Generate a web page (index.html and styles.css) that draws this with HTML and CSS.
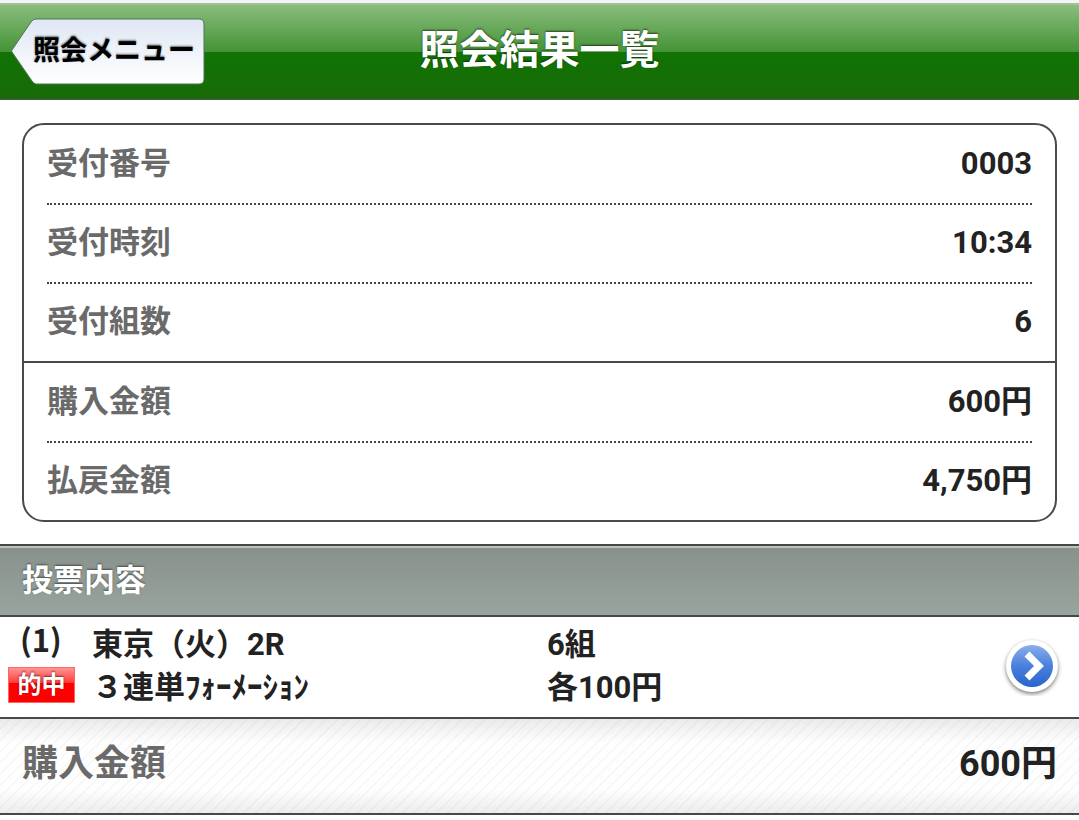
FILE: index.html
```html
<!DOCTYPE html>
<html lang="ja">
<head>
    <meta charset="UTF-8">
    <meta name="viewport" content="width=device-width, initial-scale=1.0">
    <title>照会結果一覧</title>
    <link rel="stylesheet" href="styles.css">
</head>
<body>
    <!-- Title bar with the back button -->
    <header class="header">
        <button type="button" class="back-button">
            <svg class="back-shape" viewBox="0 0 194 67" preserveAspectRatio="none" aria-hidden="true">
                <defs>
                    <linearGradient id="backFill" x1="0" y1="0" x2="0" y2="1">
                        <stop offset="0" stop-color="#dfe7f4"/>
                        <stop offset="1" stop-color="#ffffff"/>
                    </linearGradient>
                </defs>
                <path d="M25 1 H188 Q193 1 193 6 V61 Q193 66 188 66 H25 Q23 66 21 63 L1 34 Q0 33 1 32 L20 4 Q22 1 25 1 Z" fill="url(#backFill)" stroke="#55705a" stroke-width="1"/>
            </svg>
            <span class="back-label">照会メニュー</span>
        </button>
        <h1>照会結果一覧</h1>
    </header>

    <main>
        <!-- Receipt summary -->
        <div class="summary">
            <dl class="summary-group">
                <div class="summary-row"><dt>受付番号</dt><dd>0003</dd></div>
                <div class="summary-row"><dt>受付時刻</dt><dd>10:34</dd></div>
                <div class="summary-row"><dt>受付組数</dt><dd>6</dd></div>
            </dl>
            <dl class="summary-group">
                <div class="summary-row"><dt>購入金額</dt><dd>600円</dd></div>
                <div class="summary-row"><dt>払戻金額</dt><dd>4,750円</dd></div>
            </dl>
        </div>

        <!-- List of bets -->
        <h2>投票内容</h2>
        <a href="#detail" class="bet">
            <span class="bet-status">
                <span class="bet-number">(1)</span>
                <span class="hit">的中</span>
            </span>
            <span class="bet-text">
                <span>東京（火）2R</span>
                <span>３連単ﾌｫｰﾒｰｼｮﾝ</span>
            </span>
            <span class="bet-text">
                <span>6組</span>
                <span>各100円</span>
            </span>
            <svg class="bet-arrow" viewBox="0 0 60 60" aria-hidden="true">
                <defs>
                    <linearGradient id="arrowFill" x1="0" y1="0" x2="0" y2="1">
                        <stop offset="0" stop-color="#8aaeea"/>
                        <stop offset="0.5" stop-color="#4a80dc"/>
                        <stop offset="1" stop-color="#2864cf"/>
                    </linearGradient>
                </defs>
                <circle class="arrow-rim" cx="30" cy="30" r="26"/>
                <circle cx="30" cy="30" r="21" fill="url(#arrowFill)"/>
                <path d="M25 18 L37 30 L25 42" fill="none" stroke="#fff" stroke-width="7"/>
            </svg>
        </a>

        <!-- Total amount -->
        <dl class="total">
            <dt>購入金額</dt>
            <dd>600円</dd>
        </dl>
    </main>
</body>
</html>
```
FILE: styles.css
```css
* {
    box-sizing: border-box;
}

body {
    margin: 0;
    background-color: #fff;
    color: #222;
    font-family: Roboto, "Noto Sans CJK JP", sans-serif;
    font-size: 31px;
    font-weight: bold;
    line-height: 43px;
}

h1, h2, dl, dd {
    margin: 0;
}

/* Title bar */
.header {
    display: grid;
    grid-template-columns: 1fr auto 1fr;
    align-items: center;
    height: 100px;
    padding: 0 11px;
    border-top: 3px solid #f4f4f4;
    border-bottom: 1px solid #555;
    background: linear-gradient(#a5c09d 0, #a5c09d 2px, #8abd7d 2px, #449336 49px, #117303 49px, #186b08 100%);
}

.header h1 {
    color: #fff;
    font-size: 40px;
    line-height: 60px;
    text-shadow: 0 -1px 2px rgba(0, 0, 0, 0.6);
}

.back-button {
    position: relative;
    justify-self: start;
    height: 67px;
    padding: 0 10px 0 22px;
    border: none;
    background: none;
    color: #000;
    font: inherit;
    font-size: 27px;
    cursor: pointer;
}

/* Arrow shape behind the button text */
.back-shape {
    position: absolute;
    top: 0;
    left: 0;
    width: 100%;
    height: 100%;
}

.back-label {
    position: relative;
    text-shadow: 0 -1px 2px rgba(0, 0, 0, 0.6);
}

/* Receipt summary */
.summary {
    margin: 23px 22px 22px;
    border: 2px solid #4a4a4a;
    border-radius: 22px;
}

.summary-group {
    padding: 0 23px;
}

.summary-group + .summary-group {
    border-top: 2px solid #4a4a4a;
}

.summary-row {
    display: flex;
    justify-content: space-between;
    align-items: center;
    height: 78px;
    padding-bottom: 2px;
}

.summary-row + .summary-row {
    height: 79px;
    border-top: 2px dotted #444;
}

dt {
    color: #6a6a6a;
}

/* Section heading */
h2 {
    padding: 13px 22px;
    border-top: 2px solid #484848;
    border-bottom: 2px solid #484848;
    background: linear-gradient(#bcc2bf 0, #bcc2bf 2px, #88918c 2px, #9aa49e 100%);
    color: #fff;
    font-size: 31px;
    text-shadow: 0 -1px 2px rgba(0, 0, 0, 0.5);
}

/* One bet */
.bet {
    display: grid;
    grid-template-columns: 84px 5fr 5fr 60px;
    align-items: center;
    padding: 6px 17px 8px 8px;
    color: inherit;
    text-decoration: none;
}

.bet-status,
.bet-text {
    display: flex;
    flex-direction: column;
    align-items: flex-start;
}

.bet-status {
    align-self: start;
    gap: 12px;
}

.bet-number {
    padding-left: 12px;
    font-family: "Noto Sans CJK JP", sans-serif;
    line-height: 32px;
}

.hit {
    width: 67px;
    border: 1px solid #f66;
    background: linear-gradient(#ff9494 0, #ff3838 45%, #f00 45%, #f00 100%);
    color: #fff;
    font-size: 24px;
    line-height: 34px;
    text-align: center;
    text-shadow: 0 -1px 2px rgba(0, 0, 0, 0.5);
}

.bet-arrow {
    width: 60px;
    height: 60px;
}

.arrow-rim {
    fill: #fff;
    filter: drop-shadow(0 2px 2px rgba(0, 0, 0, 0.5));
}

/* Total amount */
.total {
    display: flex;
    justify-content: space-between;
    align-items: center;
    height: 98px;
    padding: 0 22px 4px;
    border-top: 2px solid #484848;
    border-bottom: 2px solid #484848;
    background:
        linear-gradient(rgba(0, 0, 0, 0.08), transparent 25%, transparent 75%, rgba(0, 0, 0, 0.07)),
        repeating-linear-gradient(135deg, #fefefe 0, #fefefe 6px, #f3f3f3 7px, #fefefe 8px);
    font-size: 36px;
}
```
